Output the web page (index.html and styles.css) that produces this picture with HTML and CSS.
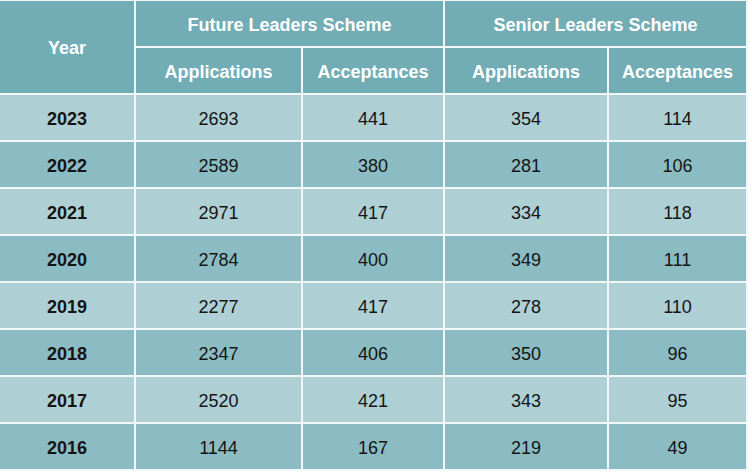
FILE: index.html
```html
<!DOCTYPE html>
<html lang="en">
<head>
<meta charset="utf-8">
<title>Leaders Schemes</title>
<link rel="stylesheet" href="styles.css">
</head>
<body>
<div class="table">
  <div class="cell head year">Year</div>
  <div class="cell head scheme scheme-a">Future Leaders Scheme</div>
  <div class="cell head scheme scheme-b">Senior Leaders Scheme</div>
  <div class="cell head">Applications</div>
  <div class="cell head">Acceptances</div>
  <div class="cell head">Applications</div>
  <div class="cell head">Acceptances</div>

  <div class="row light"><div class="cell y">2023</div><div class="cell">2693</div><div class="cell">441</div><div class="cell">354</div><div class="cell">114</div></div>
  <div class="row dark"><div class="cell y">2022</div><div class="cell">2589</div><div class="cell">380</div><div class="cell">281</div><div class="cell">106</div></div>
  <div class="row light"><div class="cell y">2021</div><div class="cell">2971</div><div class="cell">417</div><div class="cell">334</div><div class="cell">118</div></div>
  <div class="row dark"><div class="cell y">2020</div><div class="cell">2784</div><div class="cell">400</div><div class="cell">349</div><div class="cell">111</div></div>
  <div class="row light"><div class="cell y">2019</div><div class="cell">2277</div><div class="cell">417</div><div class="cell">278</div><div class="cell">110</div></div>
  <div class="row dark"><div class="cell y">2018</div><div class="cell">2347</div><div class="cell">406</div><div class="cell">350</div><div class="cell">96</div></div>
  <div class="row light"><div class="cell y">2017</div><div class="cell">2520</div><div class="cell">421</div><div class="cell">343</div><div class="cell">95</div></div>
  <div class="row dark"><div class="cell y">2016</div><div class="cell">1144</div><div class="cell">167</div><div class="cell">219</div><div class="cell">49</div></div>
</div>
</body>
</html>
```

FILE: styles.css
```css
html, body {
  margin: 0;
  padding: 0;
  background: #ffffff;
}

.table {
  display: grid;
  grid-template-columns: 134px 165px 140px 162px 137px;
  grid-template-rows: repeat(10, 45px);
  gap: 2px;
  padding: 1px 2px 2px 0;
  width: max-content;
  background: #f2f8f9;
  font-family: "Liberation Sans", Arial, sans-serif;
  font-size: 18px;
  color: #141414;
}

.cell {
  display: flex;
  align-items: center;
  justify-content: center;
  padding-top: 3px;
}

.head {
  background: #72adb5;
  color: #ffffff;
  font-weight: bold;
}

.year {
  grid-row: span 2;
}

.scheme {
  grid-column: span 2;
}

.row {
  display: contents;
}

.row.light > .cell {
  background: #aed0d4;
}

.row.dark > .cell {
  background: #8bbcc3;
}

.y {
  font-weight: bold;
}
```
